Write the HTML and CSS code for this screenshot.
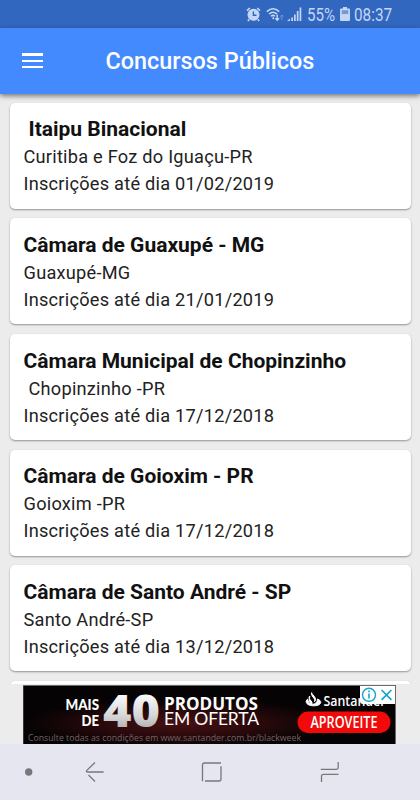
FILE: index.html
```html
<!DOCTYPE html>
<html lang="pt-BR">
<head>
<meta charset="utf-8">
<title>Concursos Públicos</title>
<link rel="stylesheet" href="styles.css">
</head>
<body>
<div class="screen">
  <div class="status">
    <svg class="alarm" width="15" height="15" viewBox="0 0 15 15"><circle cx="7.5" cy="7.8" r="6" fill="#c4d6f5"/><path d="M1 3.6 3.8 1M14 3.6 11.2 1M3.2 12.4 1.9 14M11.8 12.4 13.1 14" stroke="#c4d6f5" stroke-width="1.7"/><path d="M7.4 4.4V8.2H10.5" fill="none" stroke="#3267bf" stroke-width="1.4"/></svg>
    <svg class="wifi" width="18" height="15" viewBox="0 0 18 15" fill="none" stroke="#c4d6f5"><path d="M.8 4.6Q7-1.2 13.2 4.6M3 7Q7 3.4 11 7M5 9.3Q7 7.5 9 9.3" stroke-width="1.5"/><circle cx="7.3" cy="11.3" r="1" fill="#c4d6f5" stroke="none"/><path d="M11.2 7.5V13M9.4 11.2 11.2 13.2 13 11.2" stroke-width="1.4"/><path d="M15.8 13V8M14.3 9.6 15.8 8 17.3 9.6" stroke="#7198d9"/></svg>
    <svg class="signal" width="15" height="14" viewBox="0 0 15 14" fill="#c4d6f5"><path d="M0 14 3 11.5V14zM4.3 10.5H6V14H4.3zM7 7.5H8.7V14H7zM9.8 4H11.5V14H9.8zM12.6.5H14.3V14H12.6z"/></svg>
    <span class="pct">55%</span>
    <svg class="battery" width="10" height="14" viewBox="0 0 10 14"><path d="M3 0H7V1.5H9Q10 1.5 10 2.5V13Q10 14 9 14H1Q0 14 0 13V2.5Q0 1.5 1 1.5H3z" fill="#c4d6f5"/><path d="M1.7 3.2H8.3V7H1.7z" fill="#7599d5"/></svg>
    <span class="time">08:37</span>
  </div>
  <header class="bar">
    <div class="menu"><i></i><i></i><i></i></div>
    <h1>Concursos Públicos</h1>
  </header>
  <main class="list">
    <article class="card"><h2 class="lead">Itaipu Binacional</h2><p>Curitiba e Foz do Iguaçu-PR</p><p>Inscrições até dia 01/02/2019</p></article>
    <article class="card"><h2>Câmara de Guaxupé - MG</h2><p>Guaxupé-MG</p><p>Inscrições até dia 21/01/2019</p></article>
    <article class="card"><h2>Câmara Municipal de Chopinzinho</h2><p class="lead">Chopinzinho -PR</p><p>Inscrições até dia 17/12/2018</p></article>
    <article class="card"><h2>Câmara de Goioxim - PR</h2><p>Goioxim -PR</p><p>Inscrições até dia 17/12/2018</p></article>
    <article class="card"><h2>Câmara de Santo André - SP</h2><p>Santo André-SP</p><p>Inscrições até dia 13/12/2018</p></article>
    <article class="card"></article>
  </main>
  <div class="adstrip">
  <svg class="ad" width="373" height="59" viewBox="0 0 373 59">
    <defs>
      <radialGradient id="glow" cx=".42" cy=".65" r=".42"><stop offset="0" stop-color="#481013"/><stop offset=".55" stop-color="#27090b"/><stop offset="1" stop-color="#050304"/></radialGradient>
      <linearGradient id="silver" x2="0" y2="1"><stop offset=".2" stop-color="#fff"/><stop offset=".6" stop-color="#d6d6d6"/><stop offset=".85" stop-color="#aaa"/></linearGradient>
    </defs>
    <rect width="373" height="59" fill="url(#glow)"/>
    <g class="adtext">
      <text x="42.5" y="25" font-size="15.5" font-weight="900" textLength="33.5" lengthAdjust="spacingAndGlyphs">MAIS</text>
      <text x="58.5" y="41" font-size="15" font-weight="900" textLength="17.5" lengthAdjust="spacingAndGlyphs">DE</text>
      <text class="forty" x="80" y="42" font-size="44" fill="url(#silver)" textLength="57" lengthAdjust="spacingAndGlyphs">40</text>
      <text class="produtos" x="141" y="24.5" font-size="17.5" textLength="94" lengthAdjust="spacingAndGlyphs">PRODUTOS</text>
      <text x="141" y="40" font-size="17.5" textLength="95" lengthAdjust="spacing">EM OFERTA</text>
      <text class="legal" x="5" y="55.5" font-size="9.8" textLength="273" lengthAdjust="spacingAndGlyphs">Consulte todas as condições em www.santander.com.br/blackweek</text>
      <text class="open" x="300.5" y="21" font-size="14.5" textLength="62" lengthAdjust="spacingAndGlyphs">Santander</text>
    </g>
    <path d="M288.7 7.6C287 10.4 293 13.5 291.5 16.7C293.5 14.5 292.2 12.5 291 11C289.5 9.2 288.5 8.6 288.7 7.6M286.8 11C283.5 14 291 16 288.7 19.5C286.5 18.3 285.8 14.7 286.8 11M284.8 14C281.5 16 283 20.8 290.8 20.8C298.8 20.8 299.8 15.8 294.4 14C294.4 17.8 291.8 19.3 288.8 19.4C286 18.5 285 17 284.8 14" fill="#fff" stroke="#fff" stroke-width="1"/>
    <rect x="274.5" y="26.5" width="93" height="21.5" rx="10.75" fill="#f20a0a"/>
    <text class="cta" x="287.5" y="43" font-size="15.5" textLength="67" lengthAdjust="spacingAndGlyphs">APROVEITE</text>
    <path d="M337 1H372V19H340Q337 19 337 16z" fill="#fff"/>
    <g fill="none" stroke="#16a6c8"><circle cx="346" cy="9.8" r="6.5" stroke-width="1.4"/><path d="M346 8.5V13.6M346 5.5V7.2" stroke-width="1.6"/><path d="M358.6 5 368.4 14.8M368.4 5 358.6 14.8" stroke-width="1.7"/></g>
    <path d="M0 59V.5H372.5V59" fill="none" stroke="#999" stroke-width=".7"/>
  </svg>
  </div>
  <nav class="nav">
    <svg width="420" height="56" viewBox="0 0 420 56" fill="none" stroke="#77777c" stroke-width="1.3"><circle cx="28.7" cy="28" r="3.7" fill="#77777c" stroke="none"/><path d="M95 18.5 86.8 26.4Q85.6 28 88 28H103.6M88.5 31 95 37.5"/><path d="M202.5 37.2V21Q202.5 19 204.5 19H221M221 22.3V35Q221 37 219 37H205"/><path d="M338.2 18V23.6Q338.2 25.3 336.3 25.3H320.8M338.6 30.3H323.5Q321.5 30.3 321.5 32.2V38"/></svg>
  </nav>
</div>
</body>
</html>
```

FILE: styles.css
```css
* { box-sizing: border-box; }
body { margin: 0; font-family: Roboto, sans-serif; }
.screen { width: 420px; height: 800px; overflow: hidden; background: #ececec; display: flex; flex-direction: column; }
.status { height: 28px; flex: none; background: #3267bf; display: flex; align-items: center; padding-left: 246px; color: #c4d6f5; font-size: 18px; line-height: 28px; }
.status svg { flex: none; }
.wifi { margin-left: 5px; }
.signal { margin-left: 3px; }
.pct, .time { display: inline-block; transform-origin: 0 50%; white-space: nowrap; }
.pct { width: 27px; margin-left: 5px; transform: translateY(1px) scaleX(.84); }
.battery { margin-left: 6px; }
.time { margin-left: 4px; width: 39px; transform: translateY(1px) scaleX(.85); }
.bar { height: 65.5px; flex: none; background: #448aff; display: flex; align-items: center; padding-left: 22px; box-shadow: 0 2px 5px rgba(0,0,0,.5); z-index: 1; }
.menu { width: 21px; display: flex; flex-direction: column; gap: 4px; }
.menu i { height: 2.3px; background: #fff; }
h1 { margin: 1px 0 0 62.5px; font-size: 23.4px; font-weight: 500; color: #fff; white-space: nowrap; line-height: 30px; }
.list { flex: 1; min-height: 0; overflow: hidden; padding: 9px 9.5px 0; display: flex; flex-direction: column; gap: 9.7px; }
.card { height: 106px; flex: none; background: #fff; border-radius: 5px; box-shadow: 0 1px 2px rgba(0,0,0,.38); padding: 12.9px 14px 0; color: #222; }
h2 { margin: 0; font-size: 21px; line-height: 28px; font-weight: 700; white-space: nowrap; color: #111; }
p { margin: 0; font-size: 18.2px; line-height: 27px; letter-spacing: .24px; white-space: nowrap; }
.lead { padding-left: 5px; }
.adstrip { height: 60.5px; flex: none; background: #ececec; padding: 1.5px 0 0 23px; }
.ad { display: block; }
.adtext { font-family: Lato, sans-serif; fill: #fff; }
.produtos { font-family: "Open Sans", sans-serif; font-weight: 700; }
.forty { font-family: "Open Sans", sans-serif; font-weight: 800; }
.legal { font-family: "Open Sans", sans-serif; fill: #746466; }
.open, .cta { font-family: "Open Sans", sans-serif; fill: #fff; font-weight: 600; }
.nav { height: 56px; flex: none; background: #e6e6f1; }
.nav svg { display: block; }
```
